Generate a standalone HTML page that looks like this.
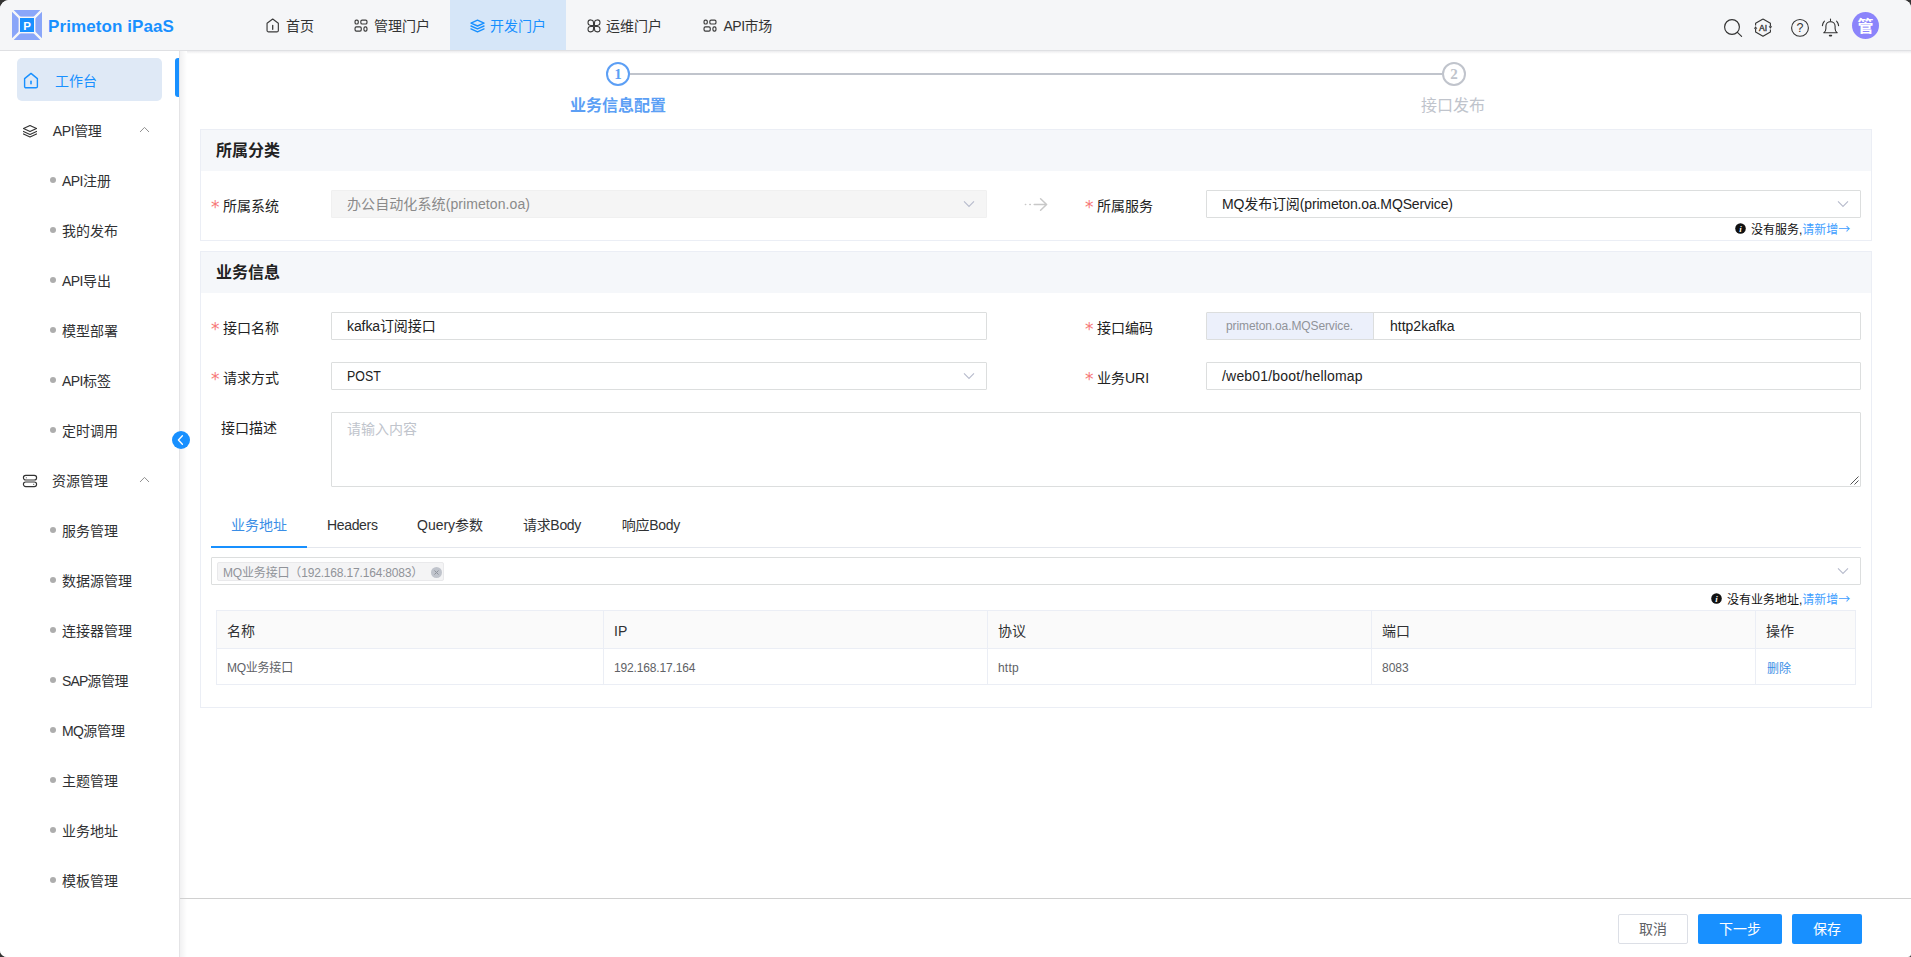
<!DOCTYPE html>
<html lang="zh-CN">
<head>
<meta charset="utf-8">
<title>Primeton iPaaS</title>
<style>
*{box-sizing:border-box;margin:0;padding:0}
html,body{width:1911px;height:957px;overflow:hidden;background:#343434}
body{font-family:"Liberation Sans","Noto Sans CJK SC",sans-serif;font-size:14px;color:#303133;position:relative}
#app{position:absolute;left:0;top:0;width:1911px;height:957px;background:#fff;border-radius:9px 8px 3px 7px;overflow:hidden}
.abs{position:absolute}
.t{position:absolute;white-space:nowrap;line-height:20px;height:20px}
/* header */
#hdr{position:absolute;left:0;top:0;width:1911px;height:50px;background:#f5f6f8}
#hdrline{position:absolute;left:0;top:50px;width:1911px;height:1px;background:#dfe0e3}
#hdrshadow{position:absolute;left:0;top:51px;width:1911px;height:3px;background:linear-gradient(#ececee,#fff)}
.nav{position:absolute;top:0;height:50px}
.nav.on{background:#d6e6f8}
.nav .t{top:16px;font-size:14px;color:#333}
.nav.on .t{color:#1890ff}
/* sidebar */
#side{position:absolute;left:0;top:51px;width:180px;height:906px;background:#fff;border-right:1px solid #e4e4e6}
#sideshadow{position:absolute;left:180px;top:51px;width:7px;height:906px;background:linear-gradient(90deg,#f1f1f2,#fff)}
.sub{position:absolute;left:0;width:179px;height:20px}
.sub i{position:absolute;left:49.5px;top:6px;width:6px;height:6px;border-radius:50%;background:#adadad}
.sub>span{position:absolute;left:62px;top:0;line-height:20px;font-size:14px;color:#303133;white-space:nowrap}
.grp>span{position:absolute;left:52px;top:0;line-height:20px;font-size:14px;color:#303133;white-space:nowrap}
/* cards */
.card{position:absolute;left:200px;width:1672px;border:1px solid #ebeef5;background:#fff}
.card .hd{position:absolute;left:0;top:0;width:1670px;height:41px;background:#f5f7fa}
.card .hd b{position:absolute;left:15px;top:10px;font-size:16px;line-height:22px;color:#222;font-weight:bold}
.lbl{position:absolute;font-size:14px;line-height:20px;color:#222;white-space:nowrap}
.lbl em{position:absolute;left:-12px;top:1px;color:#f67878;font-style:normal;font-size:17px;font-family:"DejaVu Sans",sans-serif}
.inp{position:absolute;height:28px;border:1px solid #dcdede;background:#fff;border-radius:1px;font-size:14px;line-height:26px;color:#222;padding-left:15px;white-space:nowrap}
.chev{position:absolute;width:12px;height:8px}
.btn{position:absolute;top:914px;height:30px;border-radius:2px;font-size:14px;line-height:30px;text-align:center}
</style>
</head>
<body>
<div id="app">
<!-- HEADER -->
<div id="hdr">
<svg class="abs" style="left:12px;top:10px" width="30" height="30" viewBox="0 0 30 30">
<rect x="0" y="0" width="30" height="30" rx="2.5" fill="#8aa6f9"/>
<path d="M0 0L30 30M30 0L0 30" stroke="#f5f6f8" stroke-width="2.3"/>
<rect x="6.6" y="6.6" width="16.8" height="16.8" fill="#f5f6f8"/>
<rect x="8" y="8" width="14" height="14" fill="#1890ff"/>
<text x="15" y="19.6" font-family="Liberation Sans,sans-serif" font-weight="bold" font-size="11.5" fill="#fff" text-anchor="middle">P</text>
</svg>
<div class="t" id="brand" style="left:48px;top:16px;font-size:17px;letter-spacing:.09px;font-weight:bold;color:#1890ff;line-height:22px;height:22px">Primeton iPaaS</div>

<div class="nav" style="left:246px;width:88px">
<svg class="abs" style="left:20.4px;top:18.4px" width="13.4" height="15" viewBox="0 0 13.4 15" fill="none" stroke="#3a3a3a" stroke-width="1.15" stroke-linejoin="round" stroke-linecap="round"><path d="M1.05 5.3L6.7 1.05L12.35 5.3V12.4a1.5 1.5 0 0 1-1.5 1.5H2.55a1.5 1.5 0 0 1-1.5-1.5Z"/><path d="M6.7 7.5V11.3" stroke-width="1.3"/></svg>
<div class="t" style="left:40px">首页</div></div>

<div class="nav" style="left:334px;width:116px">
<svg class="abs" style="left:20.4px;top:19.4px" width="14" height="14" viewBox="0 0 14 14" fill="none" stroke="#3a3a3a" stroke-width="1.15"><rect x="1.05" y="1.05" width="3.2" height="3.9" rx="1.3"/><rect x="6.85" y="1.05" width="6.1" height="3.9" rx="1.3"/><rect x="1.05" y="7.85" width="6.2" height="4.2" rx="1.3"/><rect x="9.95" y="7.85" width="3" height="4.2" rx="1.3"/></svg>
<div class="t" style="left:40px">管理门户</div></div>

<div class="nav on" style="left:450px;width:116px">
<svg class="abs" style="left:20.4px;top:19px" width="15" height="14" viewBox="0 0 15 14" fill="none" stroke="#1890ff" stroke-width="1.4" stroke-linejoin="round" stroke-linecap="round"><path d="M7.5 1.2L14 4.1L7.5 7L1 4.1Z"/><path d="M1 7L7.5 9.9L14 7"/><path d="M1 9.9L7.5 12.8L14 9.9"/></svg>
<div class="t" style="left:40px">开发门户</div></div>

<div class="nav" style="left:566px;width:116px">
<svg class="abs" style="left:21.4px;top:19.4px" width="14" height="14" viewBox="0 0 14 14" fill="none" stroke="#3a3a3a" stroke-width="1.05" stroke-linejoin="round"><path d="M6.5 6.4H3.7A2.75 2.75 0 1 1 6.5 3.7Z"/><path d="M7.5 6.4V3.7A2.75 2.75 0 1 1 10.3 6.4Z"/><path d="M6.5 7.4V10.1A2.75 2.75 0 1 1 3.7 7.4Z"/><path d="M7.5 7.4H10.3A2.75 2.75 0 1 1 7.5 10.1Z"/></svg>
<div class="t" style="left:40px">运维门户</div></div>

<div class="nav" style="left:682px;width:110px">
<svg class="abs" style="left:21.4px;top:19.4px" width="14" height="14" viewBox="0 0 14 14" fill="none" stroke="#3a3a3a" stroke-width="1.15"><rect x="1.05" y="1.05" width="3.2" height="3.9" rx="1.3"/><rect x="6.85" y="1.05" width="6.1" height="3.9" rx="1.3"/><rect x="1.05" y="7.85" width="6.2" height="4.2" rx="1.3"/><rect x="9.95" y="7.85" width="3" height="4.2" rx="1.3"/></svg>
<div class="t" style="left:41.4px;letter-spacing:-.45px">API市场</div></div>

<!-- right icons -->
<svg class="abs" style="left:1722px;top:17px" width="22" height="22" viewBox="0 0 22 22" fill="none" stroke="#333" stroke-width="1.15" stroke-linecap="round"><circle cx="10" cy="10" r="7.4"/><path d="M15.4 15.4L19.6 19.4"/></svg>
<svg class="abs" style="left:1752px;top:17px" width="22" height="22" viewBox="0 0 22 22" fill="none" stroke="#333" stroke-width="1.1" stroke-linejoin="round"><path d="M11 2L18.4 6.3V9M18.4 12.5V15L11 19.3L3.6 15V12M3.6 8.5V6.3L11 2"/><path d="M17.2 9.4h2.4l-1.2 2Z M2.4 11.6h2.4L3.6 9.6Z" fill="#333" stroke-width=".6"/><text x="11" y="13.9" font-family="Liberation Sans,sans-serif" font-size="8.6" fill="#333" stroke="#333" stroke-width=".35" text-anchor="middle">AI</text></svg>
<svg class="abs" style="left:1789px;top:17px" width="22" height="22" viewBox="0 0 22 22" fill="none" stroke="#333" stroke-width="1.1"><circle cx="11" cy="10.9" r="8.4"/><text x="11" y="15.2" font-family="Liberation Sans,sans-serif" font-size="12.5" fill="#333" stroke="none" text-anchor="middle">?</text></svg>
<svg class="abs" style="left:1819px;top:17px" width="23" height="22" viewBox="0 0 23 22" fill="none" stroke="#333" stroke-width="1.1" stroke-linecap="round" stroke-linejoin="round"><path d="M11.5 2V3.6M4.8 15.8c1.5-1 2.1-2.4 2.1-4.4V9.2a4.6 4.6 0 0 1 9.2 0v2.2c0 2 .6 3.4 2.1 4.4Z"/><path d="M10.6 18.6h1.8" stroke-width="1.6"/><path d="M5.4 4.2A8 8 0 0 0 3.4 8.6M17.6 4.2A8 8 0 0 1 19.6 8.6"/></svg>
<div class="abs" style="left:1852px;top:12px;width:27px;height:27px;border-radius:50%;background:#8b84fb;color:#fff;font-weight:bold;font-size:16px;line-height:29px;text-align:center">管</div>
</div>
<div id="hdrshadow"></div>
<!-- SIDEBAR -->
<div id="side">
<div class="abs" style="left:17px;top:7px;width:145px;height:43px;border-radius:5px;background:#dfe9f6"></div>
<svg class="abs" style="left:23px;top:21px" width="16" height="18" viewBox="0 0 16 18" fill="none" stroke="#1890ff" stroke-width="1.4" stroke-linejoin="round" stroke-linecap="round"><path d="M1.6 6.6L8 1.4L14.4 6.6V14.4a1.4 1.4 0 0 1-1.4 1.4H3A1.4 1.4 0 0 1 1.6 14.4Z"/><path d="M8 9.4v2.4" stroke-width="1.6"/></svg>
<div class="t" style="left:55px;top:20px;color:#1890ff;font-size:14px">工作台</div>
<div class="abs" style="left:175px;top:7px;width:4px;height:39px;background:#1890ff;border-radius:3px 0 0 3px"></div>
<svg class="abs" style="left:22px;top:73px" width="16" height="15" viewBox="0 0 16 15" fill="none" stroke="#333" stroke-width="1.15" stroke-linejoin="round" stroke-linecap="round"><path d="M8 1.6L14.5 4.6L8 7.6L1.5 4.6Z"/><path d="M1.5 7.4L8 10.4L14.5 7.4"/><path d="M1.5 9.9L8 12.9L14.5 9.9"/></svg>
<div class="grp abs" style="left:0;top:70px;width:179px;height:20px"><span style="letter-spacing:-.38px;left:52.8px">API管理</span></div>
<svg class="abs" style="left:139px;top:75px" width="11" height="7" viewBox="0 0 11 7" fill="none" stroke="#909090" stroke-width="1"><path d="M1 6L5.5 1.4L10 6"/></svg>
<div class="sub" style="top:120px"><i></i><span><span style="letter-spacing:-.53px">API</span>注册</span></div>
<div class="sub" style="top:170px"><i></i><span>我的发布</span></div>
<div class="sub" style="top:220px"><i></i><span><span style="letter-spacing:-.53px">API</span>导出</span></div>
<div class="sub" style="top:270px"><i></i><span>模型部署</span></div>
<div class="sub" style="top:320px"><i></i><span><span style="letter-spacing:-.53px">API</span>标签</span></div>
<div class="sub" style="top:370px"><i></i><span>定时调用</span></div>
<svg class="abs" style="left:22px;top:423px" width="16" height="14" viewBox="0 0 16 14" fill="none" stroke="#333" stroke-width="1.15"><rect x="1.4" y="1.4" width="13.2" height="4.6" rx="2.3"/><rect x="1.4" y="8" width="13.2" height="4.6" rx="2.3"/><circle cx="4.3" cy="3.7" r=".55" fill="#333" stroke="none"/><circle cx="11.7" cy="10.3" r=".55" fill="#333" stroke="none"/></svg>
<div class="grp abs" style="left:0;top:420px;width:179px;height:20px"><span>资源管理</span></div>
<svg class="abs" style="left:139px;top:425px" width="11" height="7" viewBox="0 0 11 7" fill="none" stroke="#909090" stroke-width="1"><path d="M1 6L5.5 1.4L10 6"/></svg>
<div class="sub" style="top:470px"><i></i><span>服务管理</span></div>
<div class="sub" style="top:520px"><i></i><span>数据源管理</span></div>
<div class="sub" style="top:570px"><i></i><span>连接器管理</span></div>
<div class="sub" style="top:620px"><i></i><span style="letter-spacing:-.45px"><span style="letter-spacing:-.9px">SAP</span>源管理</span></div>
<div class="sub" style="top:670px"><i></i><span style="letter-spacing:-.1px"><span style="letter-spacing:-.7px">MQ</span>源管理</span></div>
<div class="sub" style="top:720px"><i></i><span>主题管理</span></div>
<div class="sub" style="top:770px"><i></i><span>业务地址</span></div>
<div class="sub" style="top:820px"><i></i><span>模板管理</span></div>
</div>
<div id="sideshadow"></div>
<div id="hdrline"></div>
<!-- MAIN -->
<div id="main">
<div class="abs" style="left:172px;top:431px;width:18px;height:18px;border-radius:50%;background:#1890ff"><svg class="abs" style="left:4px;top:2.5px" width="9" height="12" viewBox="0 0 9 12" fill="none" stroke="#fff" stroke-width="1.35" stroke-linecap="round" stroke-linejoin="round"><path d="M6.4 1.8L2.4 6L6.4 10.2"/></svg></div>
<div class="abs" style="left:630px;top:73px;width:812px;height:2px;background:#c0c4cc"></div>
<div class="abs" style="left:606px;top:62px;width:24px;height:24px;border-radius:50%;border:2px solid #5c9ff5;background:#fff;color:#5c9ff5;font-weight:bold;font-size:15px;line-height:21px;text-align:center;font-family:'Liberation Serif',serif">1</div>
<div class="abs" style="left:1442px;top:62px;width:24px;height:24px;border-radius:50%;border:2px solid #c0c4cc;background:#fff;color:#c0c4cc;font-weight:bold;font-size:15px;line-height:21px;text-align:center;font-family:'Liberation Serif',serif">2</div>
<div class="t" style="left:518px;width:200px;text-align:center;top:95px;line-height:22px;height:22px;font-size:16px;font-weight:bold;color:#5c9ff5">业务信息配置</div>
<div class="t" style="left:1353px;width:200px;text-align:center;top:95px;line-height:22px;height:22px;font-size:16px;color:#c0c4cc">接口发布</div>
<div class="card" style="top:129px;height:112px"><div class="hd"><b>所属分类</b></div></div>
<div class="lbl" style="left:223px;top:196px"><em>*</em>所属系统</div>
<div class="inp" style="left:331px;top:190px;width:656px;background:#f5f5f5;border-color:#f0f0f0;color:#8a8a8a;letter-spacing:.09px">办公自动化系统(primeton.oa)</div>
<svg class="abs" style="left:963px;top:200px" width="12" height="8" viewBox="0 0 12 8" fill="none" stroke="#b7bbcc" stroke-width="1.1"><path d="M1 1.4L6 6.4L11 1.4"/></svg>
<svg class="abs" style="left:1023px;top:198px" width="26" height="13" viewBox="0 0 26 13" fill="none" stroke="#c8c8c8" stroke-width="1.5" stroke-linecap="round" stroke-linejoin="round"><path d="M11.2 6.5H23.4M17.6 .8L23.6 6.5L17.6 12.2"/><path d="M2.4 6.5h.3M6.8 6.5h.5" stroke-width="1.5"/></svg>
<div class="lbl" style="left:1097px;top:196px"><em>*</em>所属服务</div>
<div class="inp" style="left:1206px;top:190px;width:655px;letter-spacing:-.14px">MQ发布订阅(primeton.oa.MQService)</div>
<svg class="abs" style="left:1837px;top:200px" width="12" height="8" viewBox="0 0 12 8" fill="none" stroke="#b7bbcc" stroke-width="1.1"><path d="M1 1.4L6 6.4L11 1.4"/></svg>
<svg class="abs" style="left:1735px;top:223px" width="11" height="11" viewBox="0 0 11 11"><circle cx="5.5" cy="5.5" r="5.3" fill="#111"/><text x="5.6" y="8.9" font-family="Liberation Serif,serif" font-style="italic" font-weight="bold" font-size="9" fill="#fff" text-anchor="middle">i</text></svg>
<div class="t" style="left:1751px;top:220px;font-size:12px;line-height:18px;height:18px;color:#111">没有服务,<span style="color:#409eff">请新增<span style="font-family:'Noto Sans CJK SC',sans-serif">→</span></span></div>
<div class="card" style="top:251px;height:457px"><div class="hd"><b>业务信息</b></div></div>
<div class="lbl" style="left:223px;top:318px"><em>*</em>接口名称</div>
<div class="inp" style="left:331px;top:312px;width:656px;letter-spacing:-.1px">kafka订阅接口</div>
<div class="lbl" style="left:1097px;top:318px"><em>*</em>接口编码</div>
<div class="inp" style="left:1206px;top:312px;width:655px;padding:0"><div class="abs" style="left:0;top:0;width:167px;height:26px;background:#ecf0fb;border-right:1px solid #dcdede;font-size:12px;color:#909399;padding-left:19px;letter-spacing:-.11px">primeton.oa.MQService.</div><div class="abs" style="left:183px;top:0">http2kafka</div></div>
<div class="lbl" style="left:223px;top:368px"><em>*</em>请求方式</div>
<div class="inp" style="left:331px;top:362px;width:656px"><span style="display:inline-block;transform:scaleX(.885);transform-origin:0 50%">POST</span></div>
<svg class="abs" style="left:963px;top:372px" width="12" height="8" viewBox="0 0 12 8" fill="none" stroke="#b7bbcc" stroke-width="1.1"><path d="M1 1.4L6 6.4L11 1.4"/></svg>
<div class="lbl" style="left:1097px;top:368px"><em>*</em>业务URI</div>
<div class="inp" style="left:1206px;top:362px;width:655px;letter-spacing:.19px">/web01/boot/hellomap</div>
<div class="lbl" style="left:221px;top:418px">接口描述</div>
<div class="inp" style="left:331px;top:412px;width:1530px;height:75px;color:#c0c4cc;line-height:32px">请输入内容</div>
<svg class="abs" style="left:1850px;top:476px" width="9" height="9" viewBox="0 0 9 9" stroke="#555" stroke-width="1" fill="none"><path d="M8.5 .5L.5 8.5M8.5 4.5L4.5 8.5"/></svg>
<div class="abs" style="left:211px;top:547px;width:1650px;height:1px;background:#e4e7ed"></div>
<div class="abs" style="left:211px;top:546px;width:96px;height:2px;background:#1890ff"></div>
<div class="t" style="left:231px;top:515px;color:#3a8ee6">业务地址</div>
<div class="t" style="left:327px;top:515px;color:#303133;letter-spacing:-.34px">Headers</div>
<div class="t" style="left:417px;top:515px;color:#303133">Query参数</div>
<div class="t" style="left:523px;top:515px;color:#303133;letter-spacing:-.32px">请求Body</div>
<div class="t" style="left:621.7px;top:515px;color:#303133;letter-spacing:-.27px">响应Body</div>
<div class="inp" style="left:211px;top:557px;width:1650px;padding:0"><div class="abs" style="left:5px;top:4px;width:227px;height:19px;background:#f4f4f5;border:1px solid #e9e9eb;border-radius:2px;font-size:12px;line-height:20px;color:#909399;padding-left:5px;letter-spacing:-.17px">MQ业务接口（192.168.17.164:8083）</div><svg class="abs" style="left:219px;top:9px" width="11" height="11" viewBox="0 0 11 11"><circle cx="5.5" cy="5.5" r="5.5" fill="#c0c4cc"/><path d="M3.5 3.5L7.5 7.5M7.5 3.5L3.5 7.5" stroke="#8f939b" stroke-width="1"/></svg></div>
<svg class="abs" style="left:1837px;top:567px" width="12" height="8" viewBox="0 0 12 8" fill="none" stroke="#b7bbcc" stroke-width="1.1"><path d="M1 1.4L6 6.4L11 1.4"/></svg>
<svg class="abs" style="left:1711px;top:593px" width="11" height="11" viewBox="0 0 11 11"><circle cx="5.5" cy="5.5" r="5.3" fill="#111"/><text x="5.6" y="8.9" font-family="Liberation Serif,serif" font-style="italic" font-weight="bold" font-size="9" fill="#fff" text-anchor="middle">i</text></svg>
<div class="t" style="left:1727px;top:590px;font-size:12px;line-height:18px;height:18px;color:#111">没有业务地址,<span style="color:#409eff">请新增<span style="font-family:'Noto Sans CJK SC',sans-serif">→</span></span></div>
<div class="abs" style="left:216px;top:610px;width:1640px;height:75px;border:1px solid #ebeef5"></div>
<div class="abs" style="left:217px;top:611px;width:1638px;height:37px;background:#fafafa"></div>
<div class="abs" style="left:217px;top:648px;width:1638px;height:1px;background:#ebeef5"></div>
<div class="abs" style="left:603px;top:611px;width:1px;height:73px;background:#ebeef5"></div>
<div class="abs" style="left:987px;top:611px;width:1px;height:73px;background:#ebeef5"></div>
<div class="abs" style="left:1371px;top:611px;width:1px;height:73px;background:#ebeef5"></div>
<div class="abs" style="left:1755px;top:611px;width:1px;height:73px;background:#ebeef5"></div>
<div class="t" style="left:227px;top:621px;color:#303133">名称</div>
<div class="t" style="left:614px;top:621px;color:#303133">IP</div>
<div class="t" style="left:998px;top:621px;color:#303133">协议</div>
<div class="t" style="left:1382px;top:621px;color:#303133">端口</div>
<div class="t" style="left:1766px;top:621px;color:#303133">操作</div>
<div class="t" style="left:227px;top:658px;color:#606266;font-size:12px;letter-spacing:-.24px">MQ业务接口</div>
<div class="t" style="left:614px;top:658px;color:#606266;font-size:12px;letter-spacing:-.15px">192.168.17.164</div>
<div class="t" style="left:998px;top:658px;color:#606266;font-size:12px;letter-spacing:.2px">http</div>
<div class="t" style="left:1382px;top:658px;color:#606266;font-size:12px">8083</div>
<div class="t" style="left:1767px;top:659px;color:#3a8ee6;font-size:12px">删除</div>
<div class="abs" style="left:180px;top:898px;width:1731px;height:1px;background:#d0d0d0"></div>
<div class="btn" style="left:1618px;width:70px;border:1px solid #dcdfe6;color:#606266;line-height:28px;background:#fff">取消</div>
<div class="btn" style="left:1698px;width:84px;background:#1890ff;color:#fff">下一步</div>
<div class="btn" style="left:1792px;width:70px;background:#1890ff;color:#fff">保存</div>
</div>
</div>
</body>
</html>
